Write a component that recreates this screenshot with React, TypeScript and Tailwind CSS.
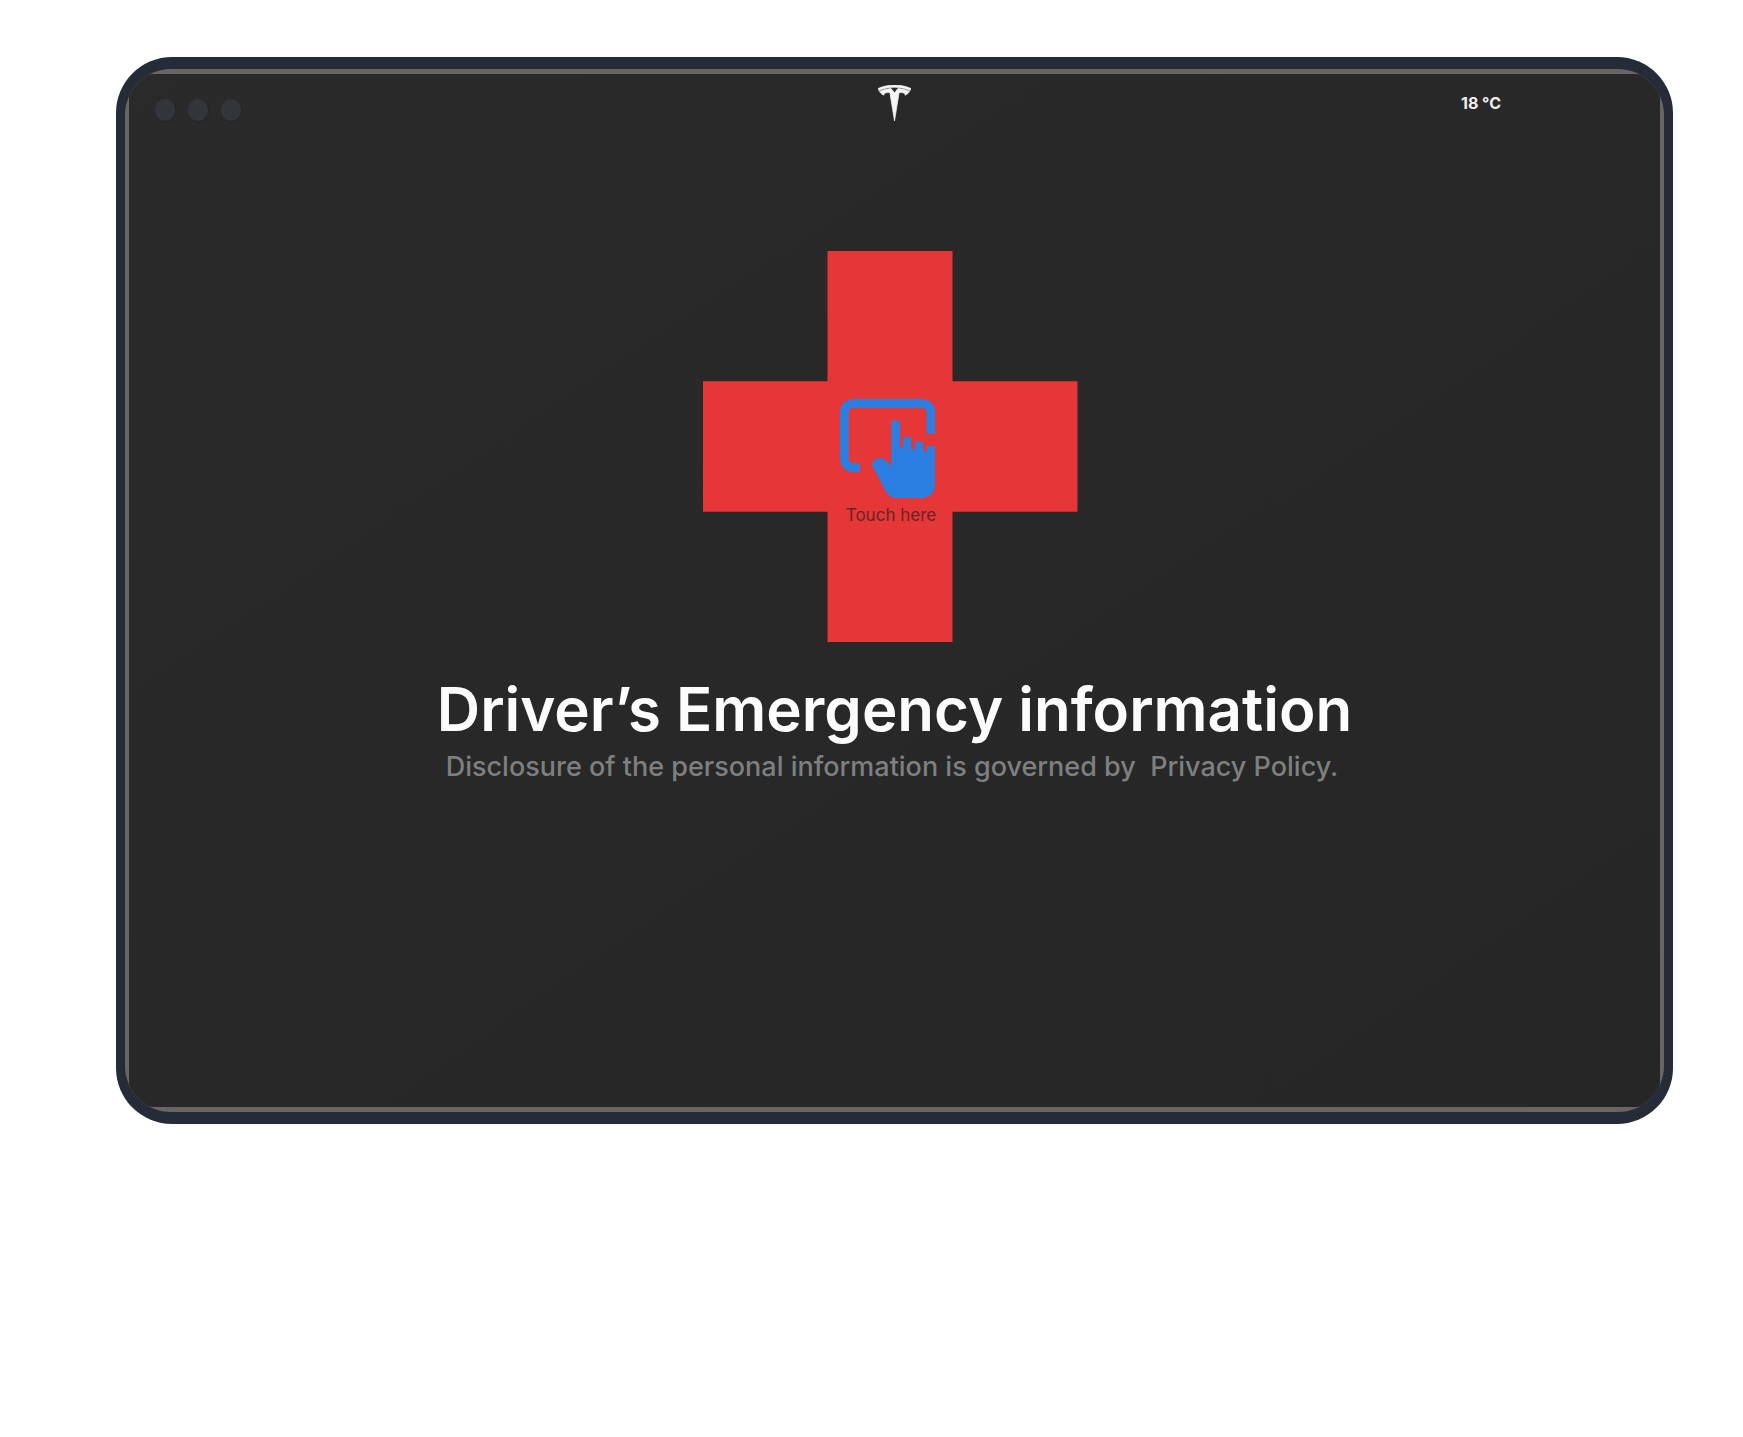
import { SiTesla } from "react-icons/si";

function TouchIcon() {
  return (
    <svg viewBox="0 0 285 297" className="mr-[5px] h-[99px] w-[95px]" aria-hidden="true">
      <path
        d="M60 206H44Q13 206 13 175V44Q13 13 44 13H242Q273 13 273 44V104"
        fill="none"
        stroke="#2b7fe3"
        strokeWidth="26"
      />
      <path
        d="M154 65H180V144H189V115H214V151H225V128H250V157H261V141H285V262Q282 290 252 297H165Q148 294 139 280L95 196Q102 178 122 177Q132 178 140 186L154 201Z"
        fill="#2b7fe3"
      />
    </svg>
  );
}

function CameraDots() {
  return (
    <div className="flex gap-[13px] pt-[25px] pl-[26px]" aria-hidden="true">
      {[0, 1, 2].map((dot) => (
        <span
          key={dot}
          className="h-[22px] w-5 rounded-full bg-[#34353b] shadow-[1px_1px_1px_#24262c]"
        />
      ))}
    </div>
  );
}

export default function App() {
  return (
    <main className="min-h-screen bg-white pt-[57px] pr-[70px] pl-[116px] font-['Inter',sans-serif]">
      <div className="flex aspect-[1557/1067] flex-col rounded-[56px] bg-[#252c38] px-[9px] py-3">
        <div className="flex flex-1 flex-col overflow-hidden rounded-[46px] bg-[#696565] px-1 py-[5px]">
          <div className="flex flex-1 flex-col rounded-3xl bg-linear-to-br from-[#2a2a2a] to-[#262626]">
            <header className="grid h-[70px] grid-cols-3 items-start">
              <CameraDots />
              <SiTesla
                className="mt-[11px] h-9 w-[33px] justify-self-center text-[#f5f5f5]"
                preserveAspectRatio="none"
                stroke="currentColor"
                strokeWidth="0.5"
                title="Tesla"
              />
              <p className="mt-[17px] mr-[159px] justify-self-end text-base leading-6 font-bold text-[#eeeeee]">
                18 °C
              </p>
            </header>
            <section className="flex flex-col items-center pt-[107px]">
              <button
                type="button"
                className="mr-[9px] flex h-[391px] w-[375px] flex-col items-center bg-[#e53638] pt-[148px] [clip-path:polygon(33.33%_0,66.67%_0,66.67%_33.33%,100%_33.33%,100%_66.67%,66.67%_66.67%,66.67%_100%,33.33%_100%,33.33%_66.67%,0_66.67%,0_33.33%,33.33%_33.33%)]"
              >
                <TouchIcon />
                <span className="mt-[5px] ml-[2px] text-[17px] leading-6 text-[#6b2426]">
                  Touch here
                </span>
              </button>
              <h1 className="mt-[31px] text-center text-[60px] leading-[72px] font-semibold text-[#fcfcfc]">
                Driver’s Emergency information
              </h1>
              <p className="mt-1 mr-[5px] text-center text-[27px] leading-9 font-medium whitespace-pre-wrap text-[#7e7f7f]">
                {"Disclosure of the personal information is governed by  "}
                <a href="#privacy">Privacy Policy.</a>
              </p>
            </section>
          </div>
        </div>
      </div>
    </main>
  );
}
